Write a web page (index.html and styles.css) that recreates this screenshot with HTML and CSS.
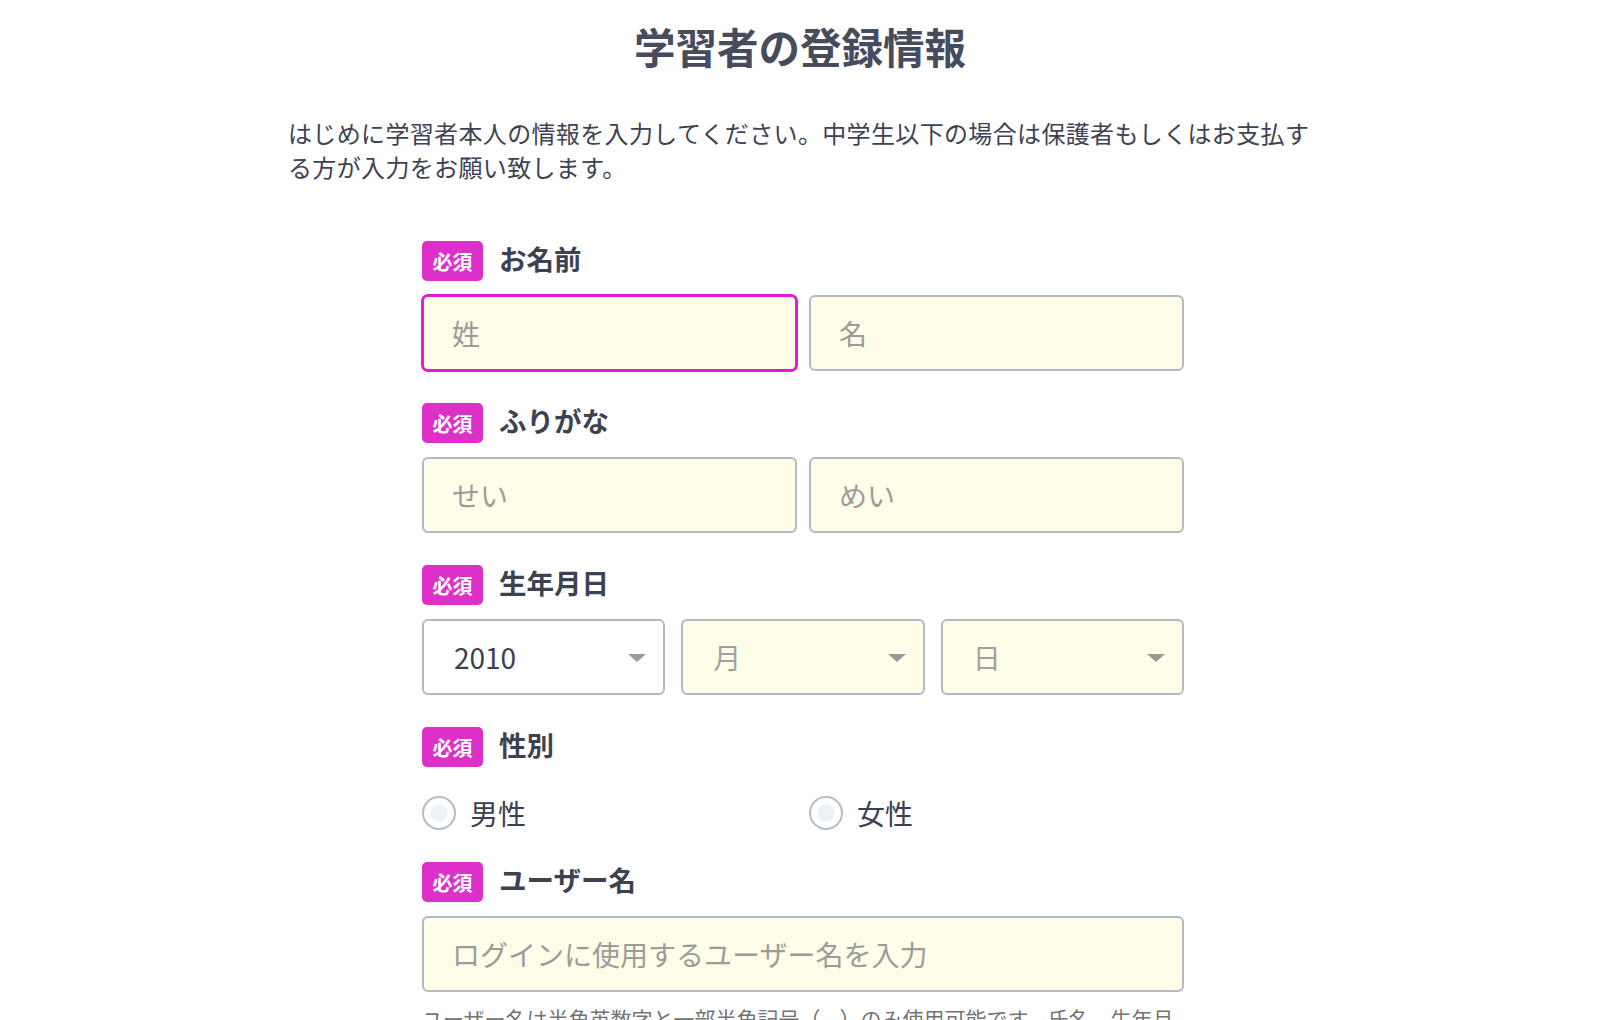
FILE: index.html
```html
<!DOCTYPE html>
<html lang="ja">
<head>
<meta charset="utf-8">
<title>学習者の登録情報</title>
<link rel="stylesheet" href="styles.css">
</head>
<body>
<main class="page">
  <h1 class="title">学習者の登録情報</h1>
  <p class="intro">はじめに学習者本人の情報を入力してください。中学生以下の場合は保護者もしくはお支払する方が入力をお願い致します。</p>

  <form class="form">
    <div class="field">
      <div class="field-head"><span class="badge">必須</span><span class="label">お名前</span></div>
      <div class="row-2">
        <input class="input is-focus" type="text" placeholder="姓">
        <input class="input" type="text" placeholder="名">
      </div>
    </div>

    <div class="field">
      <div class="field-head"><span class="badge">必須</span><span class="label">ふりがな</span></div>
      <div class="row-2">
        <input class="input" type="text" placeholder="せい">
        <input class="input" type="text" placeholder="めい">
      </div>
    </div>

    <div class="field">
      <div class="field-head"><span class="badge">必須</span><span class="label">生年月日</span></div>
      <div class="row-3">
        <div class="select-wrap">
          <select class="select is-filled"><option>2010</option></select>
          <span class="arrow"></span>
        </div>
        <div class="select-wrap">
          <select class="select"><option>月</option></select>
          <span class="arrow"></span>
        </div>
        <div class="select-wrap">
          <select class="select"><option>日</option></select>
          <span class="arrow"></span>
        </div>
      </div>
    </div>

    <div class="field">
      <div class="field-head"><span class="badge">必須</span><span class="label">性別</span></div>
      <div class="row-2 radios">
        <label class="radio"><input type="radio" name="gender"><span>男性</span></label>
        <label class="radio"><input type="radio" name="gender"><span>女性</span></label>
      </div>
    </div>

    <div class="field">
      <div class="field-head"><span class="badge">必須</span><span class="label">ユーザー名</span></div>
      <input class="input" type="text" placeholder="ログインに使用するユーザー名を入力">
      <p class="help">ユーザー名は半角英数字と一部半角記号（-_）のみ使用可能です。氏名、生年月日などの個人情報は使用しないでください。</p>
    </div>
  </form>
</main>
</body>
</html>
```

FILE: styles.css
```css
html, body {
  margin: 0;
  padding: 0;
  background: #ffffff;
}

body {
  font-family: "Noto Sans CJK JP", "Noto Sans", sans-serif;
  color: #3e4252;
}

.page {
  width: 1024px;
  margin: 0 auto;
}

.title {
  margin: 21px 0 0;
  font-size: 41.5px;
  line-height: 50px;
  font-weight: 700;
  text-align: center;
  color: #474c5d;
}

.intro {
  margin: 45px 0 0;
  font-size: 24px;
  line-height: 34px;
  letter-spacing: 0.35px;
  color: #3e4252;
}

.form {
  width: 762px;
  margin: 57px 0 0 134px;
}

.field {
  margin-bottom: 32px;
}

.field-head {
  display: flex;
  align-items: center;
  gap: 16px;
  height: 40px;
  margin-bottom: 14px;
}

.badge {
  display: flex;
  align-items: center;
  height: 40px;
  padding: 0 10.5px;
  box-sizing: border-box;
  border-radius: 5px;
  background: #dc30c9;
  color: #ffffff;
  font-size: 20px;
  font-weight: 700;
}

.label {
  font-size: 27.5px;
  line-height: 40px;
  padding-bottom: 6px;
  font-weight: 700;
  color: #3d4252;
}

.row-2 {
  display: grid;
  grid-template-columns: 1fr 1fr;
  gap: 12px;
}

.row-3 {
  display: grid;
  grid-template-columns: 1fr 1fr 1fr;
  gap: 16px;
}

.input,
.select {
  display: block;
  width: 100%;
  height: 76px;
  box-sizing: border-box;
  margin: 0;
  border: 2px solid #b1bac3;
  border-radius: 6px;
  background: #fffde8;
  padding: 0 28px;
  font-family: inherit;
  font-size: 28px;
  color: #3b4050;
  outline: none;
}

.input::placeholder {
  color: #9b9b9b;
}

.input.is-focus {
  border-color: #e41bd6;
  box-shadow: 0 0 0 1px #e41bd6;
}

.select-wrap {
  position: relative;
}

.select {
  -webkit-appearance: none;
  appearance: none;
  padding-left: 30px;
  color: #a0a0a0;
}

.select.is-filled {
  background: #ffffff;
  color: #3b4050;
}

.arrow {
  position: absolute;
  right: 19px;
  top: 35px;
  width: 0;
  height: 0;
  border-left: 9px solid transparent;
  border-right: 9px solid transparent;
  border-top: 8px solid #999999;
  pointer-events: none;
}

.radios {
  padding-top: 15px;
}

.radio {
  display: flex;
  align-items: center;
  gap: 14px;
  height: 34px;
  font-size: 28px;
  color: #3b4050;
}

.radio input {
  -webkit-appearance: none;
  appearance: none;
  margin: 0;
  width: 34px;
  height: 34px;
  box-sizing: border-box;
  border: 2px solid #b5bec7;
  border-radius: 50%;
  background: radial-gradient(circle, #eef1f6 0 8px, #ffffff 9px);
}

.help {
  margin: 10px 0 0;
  font-size: 21px;
  line-height: 32px;
  color: #737373;
}
```
